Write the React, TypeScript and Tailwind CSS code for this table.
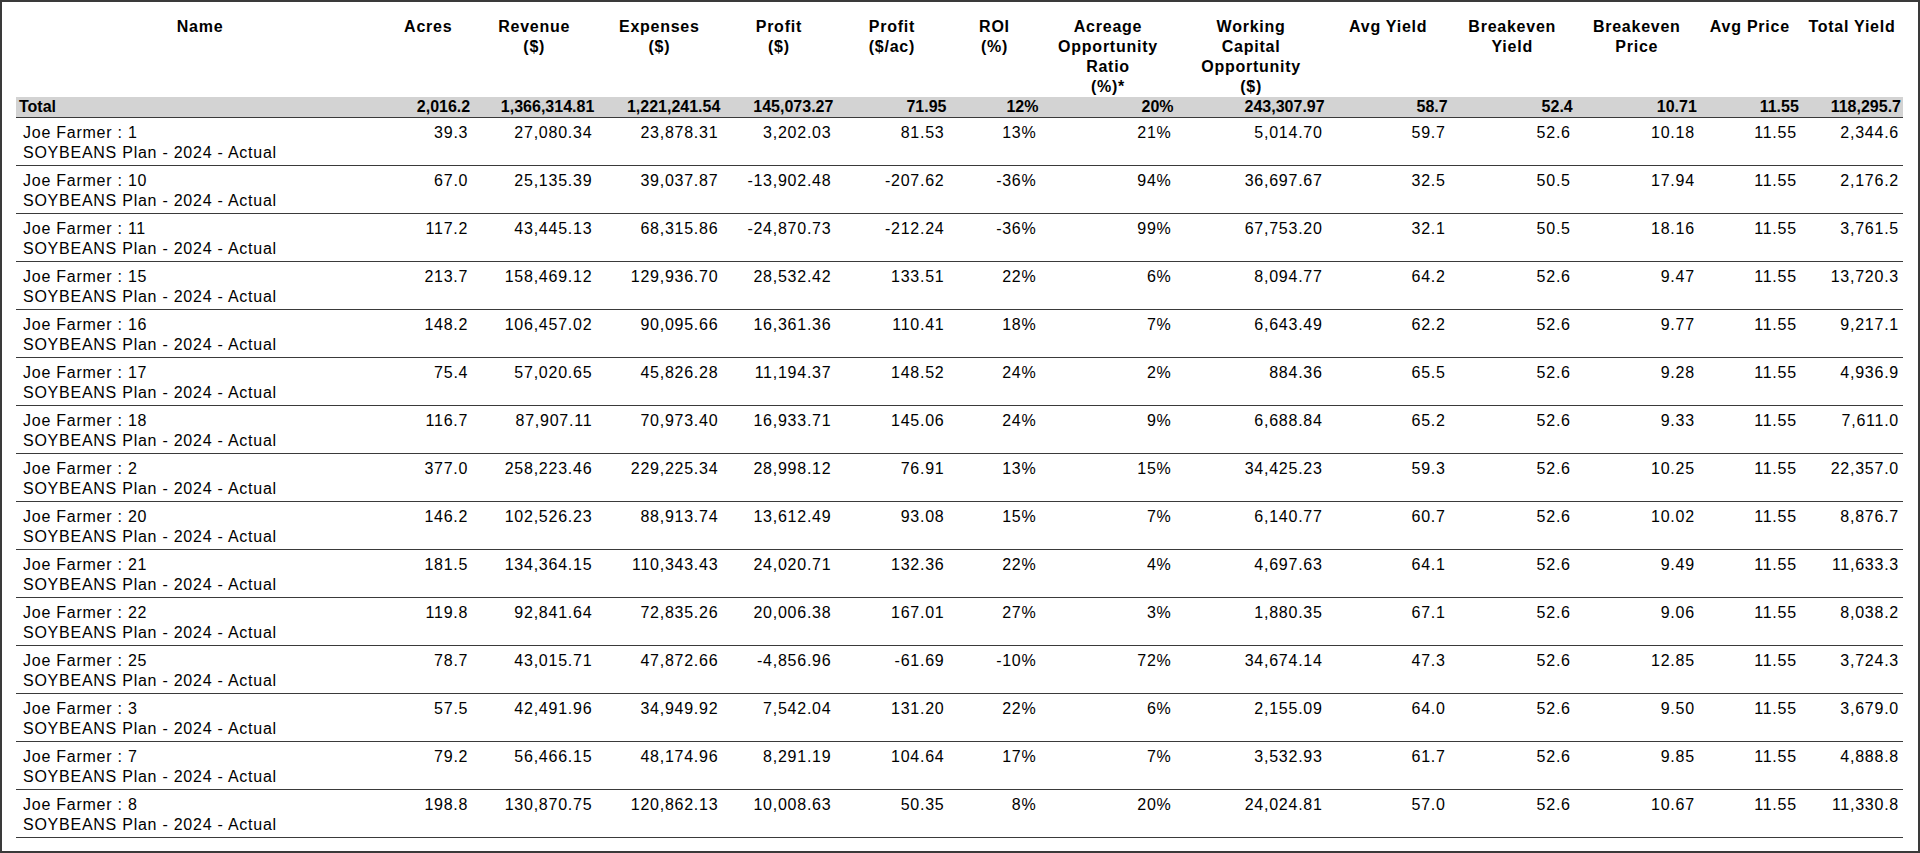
import React from 'react';

const columns: { label: string[]; width: string }[] = [
  { label: ['Name'], width: 'w-[368px]' },
  { label: ['Acres'], width: 'w-[88px]' },
  { label: ['Revenue', '($)'], width: 'w-[124px]' },
  { label: ['Expenses', '($)'], width: 'w-[126px]' },
  { label: ['Profit', '($)'], width: 'w-[113px]' },
  { label: ['Profit', '($/ac)'], width: 'w-[113px]' },
  { label: ['ROI', '(%)'], width: 'w-[92px]' },
  { label: ['Acreage', 'Opportunity', 'Ratio', '(%)*'], width: 'w-[135px]' },
  { label: ['Working', 'Capital', 'Opportunity', '($)'], width: 'w-[151px]' },
  { label: ['Avg Yield'], width: 'w-[123px]' },
  { label: ['Breakeven', 'Yield'], width: 'w-[125px]' },
  { label: ['Breakeven', 'Price'], width: 'w-[124px]' },
  { label: ['Avg Price'], width: 'w-[102px]' },
  { label: ['Total Yield'], width: 'w-[102px]' },
];

const total = [
  '2,016.2', '1,366,314.81', '1,221,241.54', '145,073.27', '71.95', '12%', '20%',
  '243,307.97', '58.7', '52.4', '10.71', '11.55', '118,295.7',
];

// field number, then the 13 figures in column order
const rows: string[][] = [
  ['1', '39.3', '27,080.34', '23,878.31', '3,202.03', '81.53', '13%', '21%', '5,014.70', '59.7', '52.6', '10.18', '11.55', '2,344.6'],
  ['10', '67.0', '25,135.39', '39,037.87', '-13,902.48', '-207.62', '-36%', '94%', '36,697.67', '32.5', '50.5', '17.94', '11.55', '2,176.2'],
  ['11', '117.2', '43,445.13', '68,315.86', '-24,870.73', '-212.24', '-36%', '99%', '67,753.20', '32.1', '50.5', '18.16', '11.55', '3,761.5'],
  ['15', '213.7', '158,469.12', '129,936.70', '28,532.42', '133.51', '22%', '6%', '8,094.77', '64.2', '52.6', '9.47', '11.55', '13,720.3'],
  ['16', '148.2', '106,457.02', '90,095.66', '16,361.36', '110.41', '18%', '7%', '6,643.49', '62.2', '52.6', '9.77', '11.55', '9,217.1'],
  ['17', '75.4', '57,020.65', '45,826.28', '11,194.37', '148.52', '24%', '2%', '884.36', '65.5', '52.6', '9.28', '11.55', '4,936.9'],
  ['18', '116.7', '87,907.11', '70,973.40', '16,933.71', '145.06', '24%', '9%', '6,688.84', '65.2', '52.6', '9.33', '11.55', '7,611.0'],
  ['2', '377.0', '258,223.46', '229,225.34', '28,998.12', '76.91', '13%', '15%', '34,425.23', '59.3', '52.6', '10.25', '11.55', '22,357.0'],
  ['20', '146.2', '102,526.23', '88,913.74', '13,612.49', '93.08', '15%', '7%', '6,140.77', '60.7', '52.6', '10.02', '11.55', '8,876.7'],
  ['21', '181.5', '134,364.15', '110,343.43', '24,020.71', '132.36', '22%', '4%', '4,697.63', '64.1', '52.6', '9.49', '11.55', '11,633.3'],
  ['22', '119.8', '92,841.64', '72,835.26', '20,006.38', '167.01', '27%', '3%', '1,880.35', '67.1', '52.6', '9.06', '11.55', '8,038.2'],
  ['25', '78.7', '43,015.71', '47,872.66', '-4,856.96', '-61.69', '-10%', '72%', '34,674.14', '47.3', '52.6', '12.85', '11.55', '3,724.3'],
  ['3', '57.5', '42,491.96', '34,949.92', '7,542.04', '131.20', '22%', '6%', '2,155.09', '64.0', '52.6', '9.50', '11.55', '3,679.0'],
  ['7', '79.2', '56,466.15', '48,174.96', '8,291.19', '104.64', '17%', '7%', '3,532.93', '61.7', '52.6', '9.85', '11.55', '4,888.8'],
  ['8', '198.8', '130,870.75', '120,862.13', '10,008.63', '50.35', '8%', '20%', '24,024.81', '57.0', '52.6', '10.67', '11.55', '11,330.8'],
];

export default function App() {
  return (
    <div className="h-[853px] w-full overflow-hidden border-2 border-[#3a3a3a] bg-white pl-[14px] pr-[14px] pt-[15px] font-['Liberation_Sans',Arial,sans-serif] text-[16px] text-black">
      <table className="w-[1887px] table-fixed border-collapse">
        <colgroup>
          {columns.map((c, i) => (
            <col key={i} className={c.width} />
          ))}
        </colgroup>
        <thead>
          <tr>
            {columns.map((c, i) => (
              <th key={i} className="p-0 align-top text-center font-bold leading-[20px] tracking-[0.75px]">
                {c.label.map((l, j) => (
                  <div key={j}>{l}</div>
                ))}
              </th>
            ))}
          </tr>
        </thead>
        <tbody>
          <tr className="h-[20px] border-b border-[#3a3a3a] bg-[#d3d3d3] font-bold leading-[19px]">
            <td className="py-0 pl-[3px] text-left">Total</td>
            {total.map((v, i) => (
              <td key={i} className="py-0 pr-[2px] text-right whitespace-nowrap">
                {v}
              </td>
            ))}
          </tr>
          {rows.map(([id, ...vals]) => (
            <tr key={id} className="border-b border-[#3a3a3a] leading-[20px] tracking-[0.75px]">
              <td className="pt-[5px] pb-[2px] pl-[7px] align-top whitespace-nowrap">
                <div>Joe Farmer : {id}</div>
                <div>SOYBEANS Plan - 2024 - Actual</div>
              </td>
              {vals.map((v, i) => (
                <td key={i} className="pt-[5px] pb-[2px] pr-[4px] align-top text-right whitespace-nowrap">
                  {v}
                </td>
              ))}
            </tr>
          ))}
        </tbody>
      </table>
    </div>
  );
}
